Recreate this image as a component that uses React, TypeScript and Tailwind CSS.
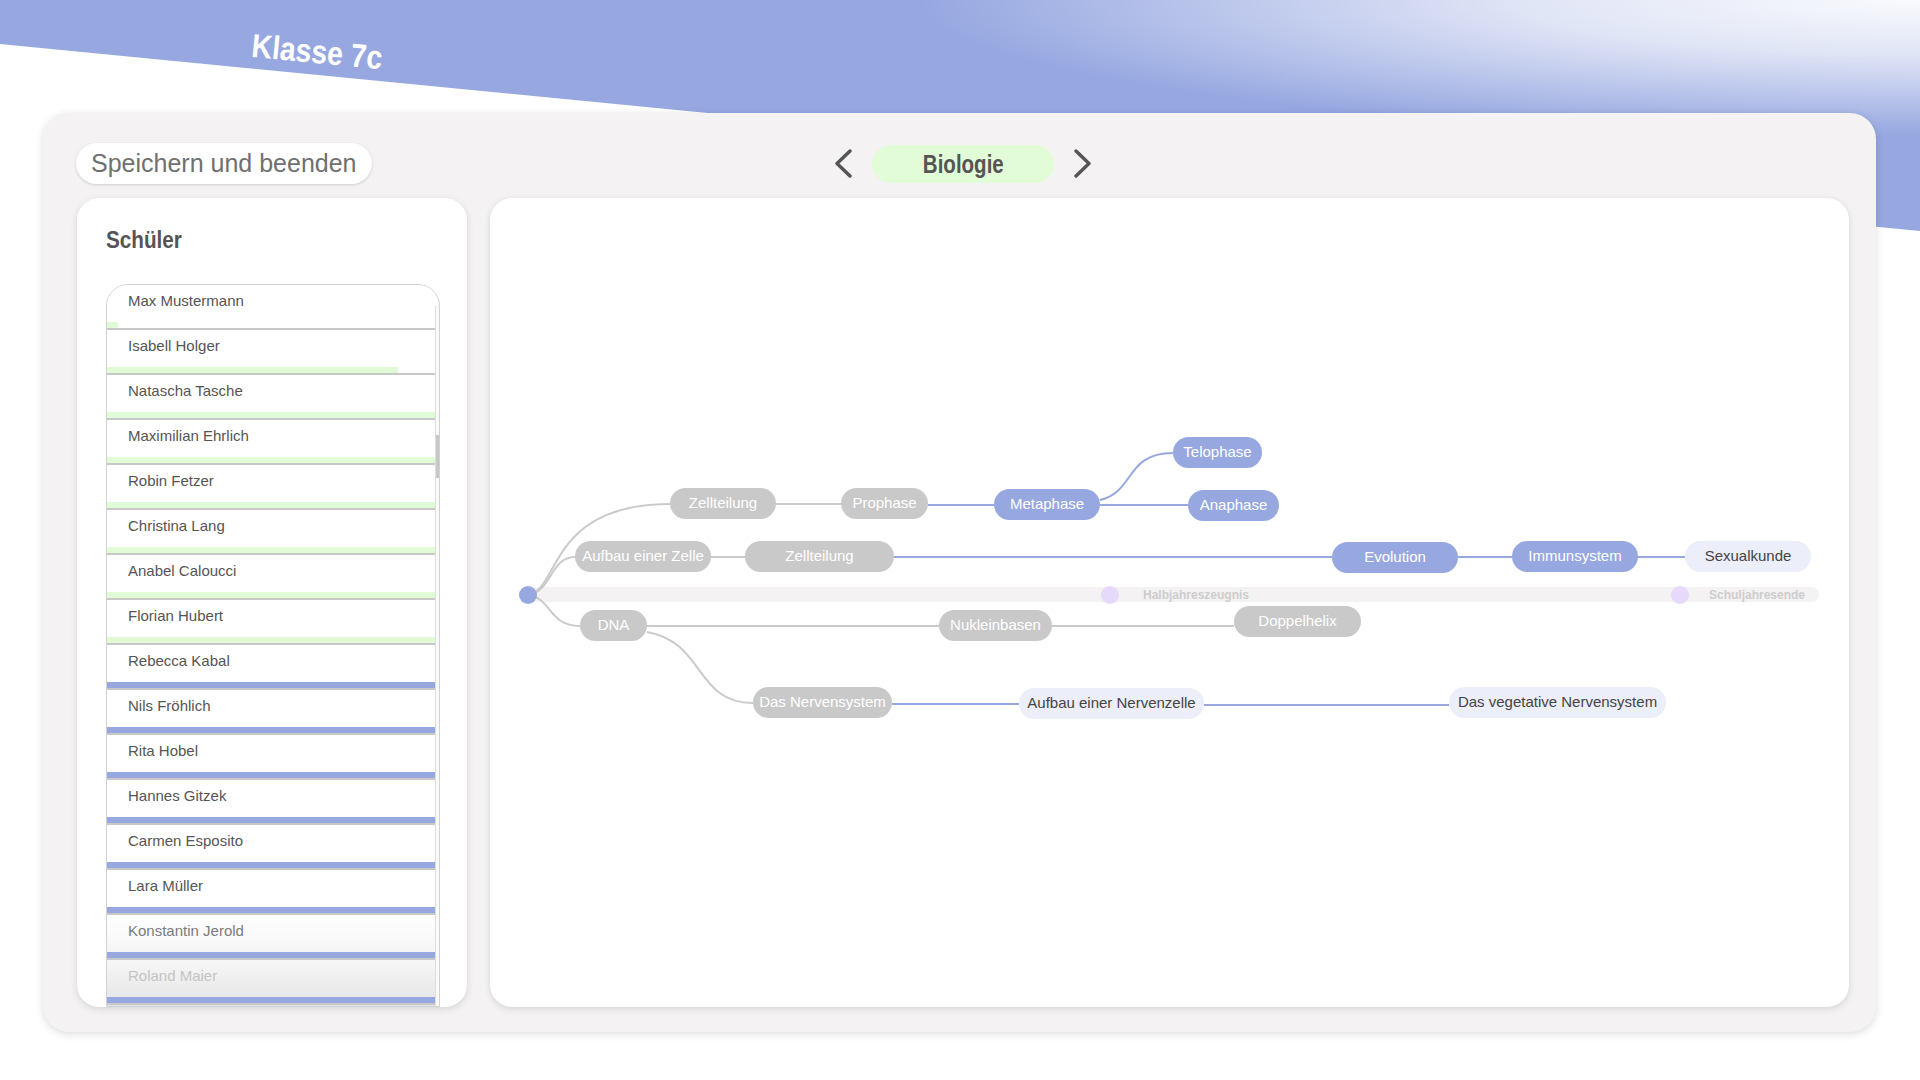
import * as React from "react";

type Kind = "gray" | "blue" | "light";

interface INode {
  label: string;
  x: number;
  w: number;
  cy: number;
  kind: Kind;
}

interface IStudent {
  name: string;
  color: "green" | "blue";
  progress: number;
  fade?: 1 | 2;
}

// graph coordinates are page coordinates, panel sits at (490, 198)
const OX = 490;
const OY = 198;

const nodes: INode[] = [
  { label: "Zellteilung", x: 670, w: 106, cy: 504, kind: "gray" },
  { label: "Prophase", x: 841, w: 87, cy: 504, kind: "gray" },
  { label: "Metaphase", x: 994, w: 106, cy: 505.5, kind: "blue" },
  { label: "Telophase", x: 1173, w: 89, cy: 453.5, kind: "blue" },
  { label: "Anaphase", x: 1188, w: 91, cy: 506.5, kind: "blue" },
  { label: "Aufbau einer Zelle", x: 575, w: 136, cy: 557.5, kind: "gray" },
  { label: "Zellteilung", x: 745, w: 149, cy: 557.5, kind: "gray" },
  { label: "Evolution", x: 1332, w: 126, cy: 558.5, kind: "blue" },
  { label: "Immunsystem", x: 1512, w: 126, cy: 557.5, kind: "blue" },
  { label: "Sexualkunde", x: 1685, w: 126, cy: 557.5, kind: "light" },
  { label: "DNA", x: 580, w: 67, cy: 626, kind: "gray" },
  { label: "Nukleinbasen", x: 939, w: 113, cy: 626, kind: "gray" },
  { label: "Doppelhelix", x: 1234, w: 127, cy: 622.5, kind: "gray" },
  { label: "Das Nervensystem", x: 753, w: 139, cy: 703, kind: "gray" },
  { label: "Aufbau einer Nervenzelle", x: 1019, w: 185, cy: 704, kind: "light" },
  { label: "Das vegetative Nervensystem", x: 1449, w: 217, cy: 703.5, kind: "light" },
];

const grayEdges = [
  "M528,595 C560,590 548,504 670,504",
  "M528,595 C552,592 550,557 575,557",
  "M528,595 C552,598 548,626 580,626",
  "M776,504 H841",
  "M711,557 H745",
  "M647,626 H939",
  "M1052,626 H1234",
  "M647,632 C705,642 695,703 753,703",
];

const blueEdges = [
  "M928,505 H994",
  "M1100,505 H1188",
  "M1100,500 C1135,492 1125,453 1173,453",
  "M894,557 H1332",
  "M1458,557 H1512",
  "M1638,557 H1685",
  "M892,704 H1019",
  "M1204,705 H1449",
];

const students: IStudent[] = [
  { name: "Max Mustermann", color: "green", progress: 3.4 },
  { name: "Isabell Holger", color: "green", progress: 88.7 },
  { name: "Natascha Tasche", color: "green", progress: 100 },
  { name: "Maximilian Ehrlich", color: "green", progress: 100 },
  { name: "Robin Fetzer", color: "green", progress: 100 },
  { name: "Christina Lang", color: "green", progress: 100 },
  { name: "Anabel Caloucci", color: "green", progress: 100 },
  { name: "Florian Hubert", color: "green", progress: 100 },
  { name: "Rebecca Kabal", color: "blue", progress: 100 },
  { name: "Nils Fröhlich", color: "blue", progress: 100 },
  { name: "Rita Hobel", color: "blue", progress: 100 },
  { name: "Hannes Gitzek", color: "blue", progress: 100 },
  { name: "Carmen Esposito", color: "blue", progress: 100 },
  { name: "Lara Müller", color: "blue", progress: 100 },
  { name: "Konstantin Jerold", color: "blue", progress: 100, fade: 1 },
  { name: "Roland Maier", color: "blue", progress: 100, fade: 2 },
];

const nodeClass: Record<Kind, string> = {
  gray: "bg-[#c9c9c9] text-white",
  blue: "bg-[#97a8e0] text-white",
  light: "bg-[#eceef9] text-[#444444]",
};

const Chevron = ({ dir }: { dir: "left" | "right" }) => (
  <svg width="21" height="29" viewBox="0 0 21 29" fill="none">
    <path
      d={dir === "left" ? "M17 2 L4 14.5 L17 27" : "M4 2 L17 14.5 L4 27"}
      stroke="#555555"
      strokeWidth="3.4"
      strokeLinecap="round"
      strokeLinejoin="round"
    />
  </svg>
);

const StudentRow = ({ s }: { s: IStudent }) => {
  const bg =
    s.fade === 1
      ? "bg-[linear-gradient(#ffffff,#f3f3f3)] text-[#7c7c7c]"
      : s.fade === 2
      ? "bg-[linear-gradient(#f7f7f7,#e4e4e4)] text-[#c4c4c4]"
      : "bg-white text-[#555555]";
  return (
    <div className={`h-[45px] shrink-0 flex flex-col ${bg}`}>
      <div className="flex-1 pt-[7px] pl-[21px] text-[15px] leading-[18px]">
        {s.name}
      </div>
      <div className="h-[6px] w-full">
        <div
          className={`h-full ${s.color === "green" ? "bg-[#e1fbd6]" : "bg-[#97a8e0]"}`}
          style={{ width: `${s.progress}%` }}
        />
      </div>
      <div className="h-[2px] bg-[#c8c8c8]" />
    </div>
  );
};

const StudentPanel = () => (
  <div className="w-[390px] h-[809px] rounded-[22px] bg-white shadow-[0_2px_7px_rgba(0,0,0,0.13)] overflow-hidden flex flex-col pt-[31px] pl-[29px]">
    <div className="w-fit origin-left scale-x-[0.9] text-[23px] leading-[23px] font-bold text-[#555555]">
      Schüler
    </div>
    <div className="mt-[32px] w-[334px] flex-1 min-h-0 flex border border-[#d2d2d2] rounded-t-[22px] overflow-hidden">
      <div className="flex-1 flex flex-col overflow-hidden">
        {students.map((s) => (
          <StudentRow key={s.name} s={s} />
        ))}
        <div className="h-[45px] shrink-0 bg-[#e4e4e4]" />
      </div>
      <div className="w-[4px] mt-[20px] border-l border-[#dedede] rounded-t-full bg-[#fafafa]">
        <div className="mt-[130px] h-[43px] bg-[#c8c8c8]" />
      </div>
    </div>
  </div>
);

const GraphPanel = () => (
  <div className="relative w-[1359px] h-[809px] rounded-[22px] bg-white shadow-[0_2px_7px_rgba(0,0,0,0.13)] overflow-hidden">
    <svg
      className="absolute left-0 top-0"
      width={1359}
      height={809}
      viewBox={`${OX} ${OY} 1359 809`}
      fill="none"
    >
      <rect x={528} y={587} width={1291} height={15} rx={7.5} fill="#f4f2f3" />
      <circle cx={1110} cy={595} r={9} fill="#e7d9fb" />
      <circle cx={1680} cy={595} r={9} fill="#e7d9fb" />
      {grayEdges.map((d) => (
        <path key={d} d={d} stroke="#cacaca" strokeWidth={2} />
      ))}
      {blueEdges.map((d) => (
        <path key={d} d={d} stroke="#97a8e0" strokeWidth={2} />
      ))}
      <circle cx={528} cy={595} r={9} fill="#97a8e0" />
    </svg>

    <div
      className="absolute text-[12px] leading-[16px] font-bold text-[#cdcdcd]"
      style={{ left: 1143 - OX, top: 595 - 8 - OY }}
    >
      Halbjahreszeugnis
    </div>
    <div
      className="absolute text-[12px] leading-[16px] font-bold text-[#cdcdcd]"
      style={{ left: 1709 - OX, top: 595 - 8 - OY }}
    >
      Schuljahresende
    </div>

    {nodes.map((n, i) => (
      <div
        key={i}
        className={`absolute h-[31px] rounded-full text-center text-[15px] leading-[30px] whitespace-nowrap ${nodeClass[n.kind]}`}
        style={{ left: n.x - OX, top: Math.round(n.cy - 16.5 - OY), width: n.w }}
      >
        {n.label}
      </div>
    ))}
  </div>
);

export default function App() {
  return (
    <div className="relative w-[1920px] h-[1080px] overflow-hidden bg-white font-['Liberation_Sans','Helvetica',sans-serif]">
      <div className="absolute left-0 top-0 w-full h-[232px] bg-[#97a8e1] [clip-path:polygon(0_0,100%_0,100%_231px,0_44px)]">
        <div className="w-full h-full bg-[radial-gradient(ellipse_1000px_135px_at_100%_0%,rgba(255,255,255,0.95)_0%,rgba(255,255,255,0.7)_40%,rgba(255,255,255,0)_100%)]" />
      </div>

      <div className="relative h-[113px]">
        <div className="w-fit ml-[241px] pt-[35px]">
          <div className="rotate-[5.5deg] scale-x-[0.86] text-[33px] leading-[33px] font-bold text-white whitespace-nowrap">
            Klasse 7c
          </div>
        </div>
      </div>

      <div className="relative ml-[43px] w-[1833px] h-[919px] rounded-[26px] bg-[#f4f2f3] shadow-[0_2px_9px_rgba(0,0,0,0.14)] pt-[30px] pl-[34px] pr-[27px] pb-[25px] flex flex-col">
        <div className="h-[41px] grid grid-cols-[1fr_auto_1fr] items-center">
          <div className="-ml-[1px]">
            <button className="h-[41px] px-[15px] rounded-full bg-white shadow-[0_1px_3px_rgba(0,0,0,0.16)] text-[25px] leading-[41px] text-[#707070] whitespace-nowrap">
              Speichern und beenden
            </button>
          </div>
          <div className="flex items-center gap-[18px]">
            <Chevron dir="left" />
            <div className="w-[182px] h-[38px] rounded-full bg-[#e2fcd8] flex items-center justify-center">
              <span className="scale-x-[0.82] text-[25px] leading-[38px] font-bold text-[#555555]">
                Biologie
              </span>
            </div>
            <Chevron dir="right" />
          </div>
          <div />
        </div>

        <div className="mt-[14px] h-[809px] flex gap-[23px]">
          <StudentPanel />
          <GraphPanel />
        </div>
      </div>
    </div>
  );
}
